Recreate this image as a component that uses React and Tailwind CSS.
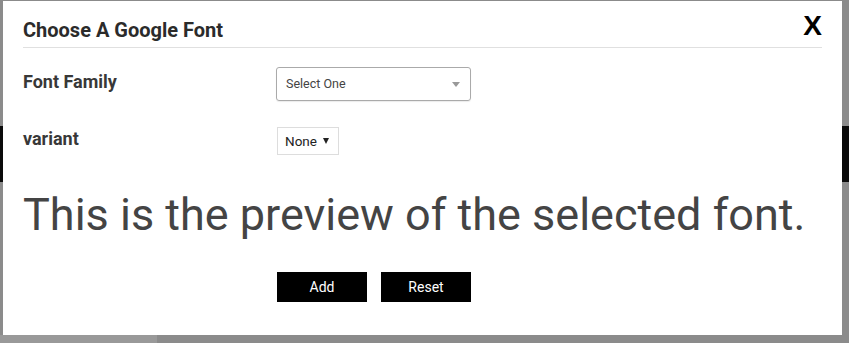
export default function App() {
  return (
    <div className="relative w-[849px] h-[343px] overflow-hidden bg-[#8b8b8b] font-['Roboto',sans-serif]">
      {/* page behind the overlay */}
      <div className="flex flex-col h-full">
        <div className="h-[126px]" />
        <div className="h-[56px] bg-[#0a0a0a]" />
        <div className="flex-1" />
        <div className="h-[8px] flex">
          <div className="w-[157px] bg-[#999]" />
        </div>
      </div>

      {/* modal */}
      <div className="absolute left-[3px] top-[1px] w-[839px] h-[334px] bg-white px-[20px] text-[#333]">
        <div className="flex items-end justify-between pt-[17px] pb-[5px] border-b border-[#e0e0e0]">
          <h2 className="text-[20px] font-bold leading-[24px] text-[#2b2b2b]">Choose A Google Font</h2>
          <button className="self-start -mt-[2px] text-[28px] font-bold leading-[20px] text-black font-['Liberation_Sans',sans-serif]">X</button>
        </div>

        <div className="flex items-center mt-[19px] h-[34px]">
          <div className="w-[253px] text-[18px] font-bold text-[#383838] -mt-[5px]">Font Family</div>
          <div className="w-[195px] h-[34px] border border-[#aaa] rounded-[3px] flex items-center justify-between pl-[9px] pr-[10px] shadow-[0_1px_1px_rgba(0,0,0,0.08)]">
            <span className="text-[12.5px] text-[#444]">Select One</span>
            <span className="w-0 h-0 border-l-[4px] border-r-[4px] border-t-[5px] border-l-transparent border-r-transparent border-t-[#999]" />
          </div>
        </div>

        <div className="flex items-center mt-[26px] h-[28px]">
          <div className="w-[254px] text-[18px] font-bold text-[#383838] -mt-[6px]">variant</div>
          <div className="w-[62px] h-[28px] border border-[#ddd] flex items-center pl-[7px] gap-[6px]">
            <span className="text-[13.5px] text-[#222]">None</span>
            <span className="w-0 h-0 border-l-[3.5px] border-r-[3.5px] border-t-[6px] border-l-transparent border-r-transparent border-t-[#222]" />
          </div>
        </div>

        <p className="mt-[34px] text-[45px] leading-[52px] text-[#444] whitespace-nowrap">This is the preview of the selected font.</p>

        <div className="flex gap-[14px] ml-[254px] mt-[31px]">
          <button className="w-[90px] h-[30px] bg-black text-white text-[14px]">Add</button>
          <button className="w-[90px] h-[30px] bg-black text-white text-[14px]">Reset</button>
        </div>
      </div>
    </div>
  );
}
